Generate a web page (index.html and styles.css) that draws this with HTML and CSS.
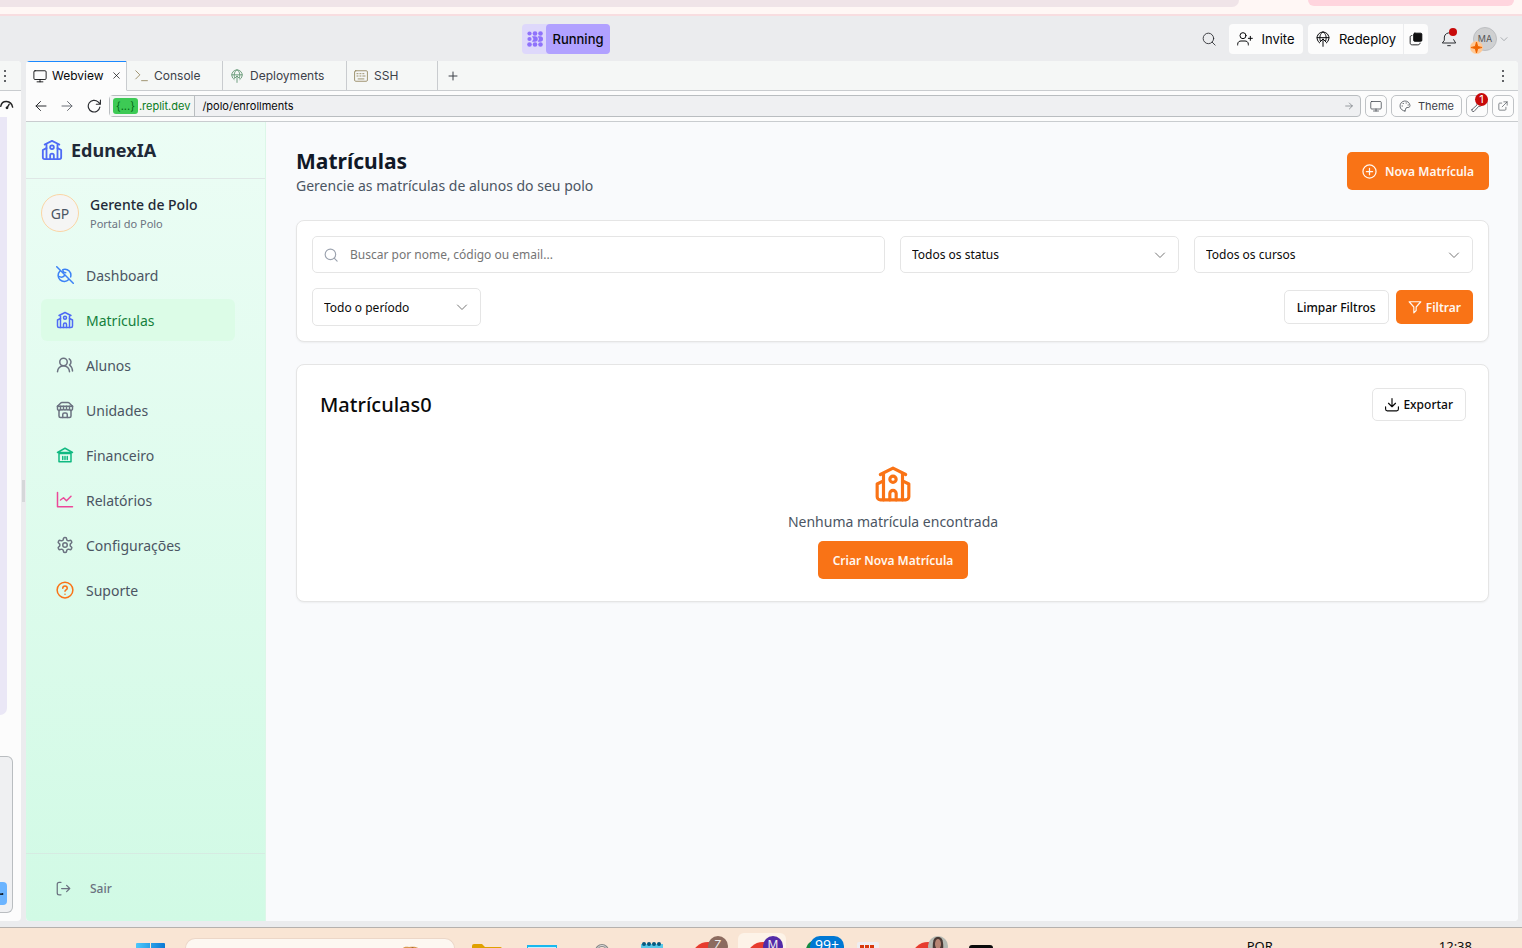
FILE: index.html
```html
<!DOCTYPE html>
<html lang="pt-BR">
<head>
<meta charset="utf-8">
<meta name="viewport" content="width=device-width, initial-scale=1">
<title>EdunexIA - Matrículas</title>
<link rel="stylesheet" href="styles.css">
</head>
<body>
<svg class="sprite" aria-hidden="true">
  <symbol id="school" viewBox="0 0 24 24"><path d="M14 22v-4a2 2 0 1 0-4 0v4"/><path d="m18 10 4 2v8a2 2 0 0 1-2 2H4a2 2 0 0 1-2-2v-8l4-2"/><path d="M18 5v17M6 5v17M4 6l8-4 8 4"/><circle cx="12" cy="9" r="2"/></symbol>
  <symbol id="search" viewBox="0 0 24 24"><circle cx="11" cy="11" r="9"/><path d="m17.500 17.500 5 5"/></symbol>
  <symbol id="chevron" viewBox="0 0 24 24"><path d="m3 8 9 9 9-9"/></symbol>
  <symbol id="globe" viewBox="0 0 24 24"><path d="M7 18a9 9 0 1 1 10 0M3 10h18M12 12v11M8 15C6 9 8 4 12 1c4 3 6 8 4 14M8 16l4-4 4 4"/></symbol>
  <symbol id="monitor" viewBox="0 0 24 24"><rect x="1.500" y="3" width="21" height="15" rx="2"/><path d="M12 18v4M7 22h10"/></symbol>
</svg>

<div class="browser-edge"><span class="edge-address"></span><span class="edge-profile"></span></div>

<header class="topbar">
  <div class="run-state">
    <svg class="run-dots" viewBox="0 0 16 16"><g><circle cx="2.500" cy="2.500" r="2.100"/><circle cx="8" cy="2.500" r="2.300"/><circle cx="13.500" cy="2.500" r="2.300"/><circle cx="2.500" cy="8" r="2.100"/><path d="M5 5.200h3a2.800 2.800 0 0 1 0 5.600H5L6.500 8zM10.700 5.200h2.500a2.800 2.800 0 0 1 0 5.600h-2.500L12 8z"/><circle cx="2.500" cy="13.500" r="2.300"/><circle cx="8" cy="13.500" r="2.300"/><circle cx="13.500" cy="13.500" r="2.300"/></g></svg>
    <button class="run-button">Running</button>
  </div>
  <div class="top-actions">
    <button class="icon-button" aria-label="Search"><svg class="icon i14"><use href="#search"/></svg></button>
    <button class="top-button invite"><svg class="icon i16" viewBox="0 0 24 24"><circle cx="9" cy="7" r="4.500"/><path d="M1 21v-1c0-4 3-5 5-5h6c2 0 5 1 5 5v1M20 8v6M17 11h6"/></svg>Invite</button>
    <div class="deploy-group">
      <button class="top-button deploy"><svg class="icon i16"><use href="#globe"/></svg>Redeploy</button>
      <button class="top-button layers" aria-label="Panels"><svg class="icon i14" viewBox="0 0 24 24"><rect x="8" y="2" width="14" height="14" rx="2" fill="#111"/><path d="M5 6C3 6 2 7 2 9v9c0 3 1 4 4 4h9c2 0 4-1 4-3"/></svg></button>
    </div>
    <button class="icon-button bell" aria-label="Notifications"><svg class="icon i16" viewBox="0 0 24 24"><path d="M14 3a7 7 0 0 0-9 6v5l-3 4h20l-3-5M10 22h4"/></svg><span class="dot"></span></button>
    <button class="account" aria-label="Account"><span class="avatar">MA</span><span class="spark"><svg viewBox="0 0 12 12"><path d="M6 1 7 5l4 1-4 1-1 4-1-4-4-1 4-1z"/></svg></span><svg class="icon i8"><use href="#chevron"/></svg></button>
  </div>
</header>

<div class="workspace">
  <aside class="left-pane">
    <div class="pane-tab"><svg class="dots" viewBox="0 0 4 14"><circle cx="2" cy="2" r="1"/><circle cx="2" cy="7" r="1"/><circle cx="2" cy="12" r="1"/></svg></div>
    <svg class="icon gauge" viewBox="0 0 20 16"><path d="M1 10C3 0 16 1 18 11M10 12l3-5"/><circle cx="10" cy="12" r="1"/></svg>
    <div class="chat-block"></div>
    <div class="composer"><button class="send" aria-label="Send"><svg viewBox="0 0 8 10"><path d="M0 4h3V3l3 2-3 2V6H0z"/></svg></button></div>
  </aside>
  <div class="handle"><span></span></div>

  <section class="window">
    <nav class="tabs">
      <button class="tab active"><svg class="icon i14"><use href="#monitor"/></svg>Webview<svg class="icon close" viewBox="0 0 10 10"><path d="m1 1 8 8M9 1 1 9"/></svg></button>
      <button class="tab console"><svg class="icon i14 olive" viewBox="0 0 24 24"><path d="m3 3 7 7-7 7M13 20h10"/></svg>Console</button>
      <button class="tab deployments"><svg class="icon i14 green"><use href="#globe"/></svg>Deployments</button>
      <button class="tab ssh"><svg class="icon i14 olive" viewBox="0 0 24 24"><rect x="1" y="3" width="22" height="18" rx="2"/><path d="M5 8h2m3 0h2m3 0h2M5 12h2m3 0h2m3 0h4M7 17h10"/></svg>SSH</button>
      <button class="tab add" aria-label="New tab"><svg class="icon i10" viewBox="0 0 10 10"><path d="M5 1v8M1 5h8"/></svg></button>
      <button class="more" aria-label="More"><svg class="dots" viewBox="0 0 4 14"><circle cx="2" cy="2" r="1"/><circle cx="2" cy="7" r="1"/><circle cx="2" cy="12" r="1"/></svg></button>
    </nav>

    <div class="urlbar">
      <div class="history">
        <button class="icon-button" aria-label="Back"><svg class="icon i12" viewBox="0 0 12 12"><path d="M11 6H1M5.500 1.500 1 6l4.500 4.500"/></svg></button>
        <button class="icon-button muted" aria-label="Forward"><svg class="icon i12" viewBox="0 0 12 12"><path d="M1 6h10M6.500 1.500 11 6l-4.500 4.500"/></svg></button>
        <button class="icon-button" aria-label="Reload"><svg class="icon i14" viewBox="0 0 24 24"><path d="M22 14a10 10 0 1 1-3-9l4 4M23 2v7h-7"/></svg></button>
      </div>
      <div class="address">
        <span class="host"><mark>{...}</mark>.replit.dev</span>
        <input class="path" type="text" aria-label="Path" value="/polo/enrollments">
        <button class="icon-button muted go" aria-label="Go"><svg class="icon i8" viewBox="0 0 12 12"><path d="M1 6h10M6.500 1.500 11 6l-4.500 4.500"/></svg></button>
      </div>
      <button class="tool" aria-label="Device"><svg class="icon i12"><use href="#monitor"/></svg></button>
      <button class="tool theme"><svg class="icon i12" viewBox="0 0 24 24"><path d="M12 22a10 10 0 1 1 10-11c0 4-3 4-6 4-4 0-2 7-4 7z"/><path d="M6 12h1M8 7h1M14 6h1M18 10h1"/></svg>Theme</button>
      <button class="tool" aria-label="Developer tools"><svg class="icon i12" viewBox="0 0 24 24"><path d="m2 19 10-9c-1-5 2-8 7-8l-3 5 3 2 4-3c0 5-3 7-8 7l-9 10c-3 1-5-1-4-4z"/></svg><span class="badge">1</span></button>
      <button class="tool" aria-label="Open in new tab"><svg class="icon i10" viewBox="0 0 24 24"><path d="M14 2h8v8M22 2 10 14M9 5H4c-1 0-2 1-2 2v13c0 1 1 2 2 2h13c1 0 2-1 2-2v-5"/></svg></button>
    </div>

    <div class="app">
      <aside class="sidebar">
        <a class="brand" href="#"><svg class="icon i22 indigo"><use href="#school"/></svg>EdunexIA</a>
        <div class="user"><span class="user-avatar">GP</span><div><strong>Gerente de Polo</strong><small>Portal do Polo</small></div></div>
        <nav class="menu">
          <a href="#"><svg class="icon i18 blue" viewBox="0 0 24 24"><path d="M1 1l22 22M5 7a8 8 0 0 0 12 11M10 4.500a8 8 0 0 1 9.500 10M4.500 14c2 1.500 6 1 7-2M9 5c0 2 2 4 4 4"/></svg>Dashboard</a>
          <a href="#" class="current"><svg class="icon i18 indigo"><use href="#school"/></svg>Matrículas</a>
          <a href="#"><svg class="icon i18 gray" viewBox="0 0 24 24"><path d="M18 21a8 8 0 0 0-16 0"/><circle cx="10" cy="8" r="5"/><path d="M22 20c0-3.370-2-6.500-4-8a5 5 0 0 0-.45-8.300"/></svg>Alunos</a>
          <a href="#"><svg class="icon i18 gray" viewBox="0 0 24 24"><path d="m2 7 4.410-4.410A2 2 0 0 1 7.830 2h8.340a2 2 0 0 1 1.420.59L22 7"/><path d="M4 12v8a2 2 0 0 0 2 2h12a2 2 0 0 0 2-2v-8"/><path d="M15 22v-4a2 2 0 0 0-2-2h-2a2 2 0 0 0-2 2v4M2 7h20"/><path d="M22 7v3a2 2 0 0 1-4 1 3 3 0 0 1-4 0 3 3 0 0 1-4 0 3 3 0 0 1-4 0 2 2 0 0 1-4-1V7M6 7v4M10 7v4M14 7v4M18 7v4"/></svg>Unidades</a>
          <a href="#"><svg class="icon i18 emerald" viewBox="0 0 24 24"><path d="M2 8.500 12 3l10 5.500zM4 9v12M20 9v12M4 21h16M9 14v4M12 14v4M15 14v4M4 10h16"/></svg>Financeiro</a>
          <a href="#"><svg class="icon i18 pink" viewBox="0 0 24 24"><path d="M2 2v19h20M6 12l4-3 4 4 6-6"/></svg>Relatórios</a>
          <a href="#"><svg class="icon i18 gray" viewBox="0 0 24 24"><path d="M12.220 2h-.44a2 2 0 0 0-2 2v.18a2 2 0 0 1-1 1.730l-.43.25a2 2 0 0 1-2 0l-.15-.08a2 2 0 0 0-2.730.73l-.22.38a2 2 0 0 0 .73 2.730l.15.100a2 2 0 0 1 1 1.720v.51a2 2 0 0 1-1 1.740l-.15.090a2 2 0 0 0-.73 2.730l.22.380a2 2 0 0 0 2.730.730l.15-.080a2 2 0 0 1 2 0l.43.250a2 2 0 0 1 1 1.730V20a2 2 0 0 0 2 2h.44a2 2 0 0 0 2-2v-.18a2 2 0 0 1 1-1.730l.43-.25a2 2 0 0 1 2 0l.15.080a2 2 0 0 0 2.730-.73l.22-.39a2 2 0 0 0-.73-2.730l-.15-.080a2 2 0 0 1-1-1.740v-.5a2 2 0 0 1 1-1.740l.15-.090a2 2 0 0 0 .73-2.730l-.22-.38a2 2 0 0 0-2.730-.73l-.15.080a2 2 0 0 1-2 0l-.43-.25a2 2 0 0 1-1-1.730V4a2 2 0 0 0-2-2z"/><circle cx="12" cy="12" r="3"/></svg>Configurações</a>
          <a href="#"><svg class="icon i18 orange" viewBox="0 0 24 24"><circle cx="12" cy="12" r="10.500"/><path d="M9 9.500a3 3 0 0 1 6 0c0 2-3 2.500-3 4M12 17.500v.2"/></svg>Suporte</a>
        </nav>
        <div class="logout"><button><svg class="icon i15" viewBox="0 0 24 24"><path d="M8 2H5C3 2 2 3 2 5v14c0 2 1 3 3 3h3M9 12h13M17 7l5 5-5 5"/></svg>Sair</button></div>
      </aside>

      <main class="content">
        <div class="page-head">
          <div><h1>Matrículas</h1><p>Gerencie as matrículas de alunos do seu polo</p></div>
          <button class="primary"><svg class="icon i15" viewBox="0 0 24 24"><circle cx="12" cy="12" r="10.500"/><path d="M12 7v10M7 12h10"/></svg>Nova Matrícula</button>
        </div>

        <form class="card filters">
          <label class="field search"><svg class="icon i14"><use href="#search"/></svg><input type="search" placeholder="Buscar por nome, código ou email..." aria-label="Buscar"></label>
          <label class="field"><select aria-label="Status"><option>Todos os status</option></select><svg class="icon i12"><use href="#chevron"/></svg></label>
          <label class="field"><select aria-label="Curso"><option>Todos os cursos</option></select><svg class="icon i12"><use href="#chevron"/></svg></label>
          <div class="filter-row">
            <label class="field period"><select aria-label="Período"><option>Todo o período</option></select><svg class="icon i12"><use href="#chevron"/></svg></label>
            <div class="filter-actions">
              <button type="button" class="outline">Limpar Filtros</button>
              <button type="button" class="primary small"><svg class="icon i14" viewBox="0 0 24 24"><path d="M2 3h20l-8 9v6l-4 4V12z"/></svg>Filtrar</button>
            </div>
          </div>
        </form>

        <section class="card results">
          <div class="results-head">
            <h2>Matrículas0</h2>
            <button class="outline"><svg class="icon i14" viewBox="0 0 24 24"><path d="M12 1v14M6 9l6 6 6-6M1 15v4c0 2 1 3 3 3h16c2 0 3-1 3-3v-4"/></svg>Exportar</button>
          </div>
          <div class="empty">
            <svg class="icon big orange"><use href="#school"/></svg>
            <p>Nenhuma matrícula encontrada</p>
            <button class="primary">Criar Nova Matrícula</button>
          </div>
        </section>
      </main>
    </div>
  </section>
</div>

<footer class="taskbar">
  <svg class="task start" viewBox="0 0 29 5"><defs><linearGradient id="win"><stop stop-color="#4cc8fb"/><stop offset="1" stop-color="#0a78d4"/></linearGradient></defs><path fill="url(#win)" d="M0 1Q0 0 1 0h13v5H0zM15 0h13q1 0 1 1v4H15z"/></svg>
  <div class="task-search"><svg viewBox="0 0 24 12"><path fill="#d9984f" d="M1 5C2 1 6 0 9 1c6-1 9 0 13 4v5H0z"/><path fill="#9c5a2a" d="M4 2l5 1 4-2 2 3-5 2z"/></svg></div>
  <svg class="task folder" viewBox="0 0 30 12"><path fill="#e0a100" d="M0 2Q0 0 2 0h8l3 3h15q2 0 2 2v7H0z"/></svg>
  <svg class="task screen" viewBox="0 0 30 12"><path fill="#19b8ee" d="M0 1h30v11H0z"/><path fill="#c8f0fc" d="M1 3h28v9H1z"/></svg>
  <svg class="task ring" viewBox="0 0 16 12"><circle cx="8" cy="8" r="5.500" fill="none" stroke="#888" stroke-width="3"/><circle cx="8" cy="8" r="5.500" fill="none" stroke="#ddd"/></svg>
  <svg class="task note" viewBox="0 0 24 12"><path fill="#58c8e8" d="M1 2h22v10H1z"/><g fill="#07577c"><circle cx="4" cy="2" r="2"/><circle cx="9" cy="2" r="2"/><circle cx="14" cy="2" r="2"/><circle cx="19" cy="2" r="2"/></g></svg>
  <div class="task chrome zed"><span>Z</span></div>
  <div class="task chrome em"><span>M</span></div>
  <div class="task whats"><span>99+</span></div>
  <svg class="task bars" viewBox="0 0 22 12"><rect width="22" height="16" rx="2" fill="#eeeef2"/><path fill="#d8380c" d="M3 3h4v9H3zM8 3h4v9H8zM13 3h4v9h-4z"/></svg>
  <div class="task chrome person"><span><svg viewBox="0 0 20 16"><path fill="#4b3a35" d="M5 16C4 4 6 1 10 1s6 3 5 15z"/><ellipse cx="10" cy="8" rx="3" ry="5" fill="#b88573"/></svg></span></div>
  <div class="task black"></div>
  <span class="lang">POR</span>
  <span class="clock">12:38</span>
</footer>
</body>
</html>
```

FILE: styles.css
```css
* { box-sizing: border-box; }
body { margin: 0; height: 100vh; display: flex; flex-direction: column; overflow: hidden; background: #ebecee; font-family: "Noto Sans", sans-serif; font-size: 14px; color: #0a0a0a; }
button, input, select { font: inherit; color: inherit; background: none; border: 0; padding: 0; margin: 0; }
button { display: flex; align-items: center; justify-content: center; white-space: nowrap; }
a { color: inherit; text-decoration: none; }
h1, h2, p { margin: 0; }
.sprite { position: absolute; width: 0; height: 0; }
.icon { flex: none; fill: none; stroke: currentColor; stroke-width: 2; stroke-linecap: round; stroke-linejoin: round; }
.i8 { width: 8px; height: 8px; }
.i10 { width: 10px; height: 10px; }
.i12 { width: 12px; height: 12px; }
.i14 { width: 14px; height: 14px; }
.i15 { width: 15px; height: 15px; }
.i16 { width: 16px; height: 16px; }
.i18 { width: 18px; height: 18px; }
.i22 { width: 22px; height: 22px; }
.icon[viewBox="0 0 10 10"], .icon[viewBox="0 0 12 12"] { stroke-width: 1; }
.blue { color: #3b82f6; }
.indigo { color: #4f6bf5; }
.emerald { color: #10b981; }
.pink { color: #ec4899; }
.orange { color: #f97316; }
.olive { color: #94875f; }
.green { color: #5f9370; }
.gray { color: #6b7280; }

.browser-edge { flex: none; height: 16px; background: #fff7f5; border-bottom: 2px solid #f8dde0; display: flex; justify-content: space-between; padding-right: 8px; }
.edge-address { width: 1239px; height: 7px; background: #f0e4e8; border-radius: 0 0 14px 0; }
.edge-profile { width: 206px; height: 6px; background: #ffd5de; border-radius: 0 0 14px 14px; }

.topbar { flex: none; height: 45px; display: flex; align-items: center; justify-content: space-between; padding: 0 14px 0 522px; font-family: "Inter", sans-serif; font-size: 13px; }
.run-state { display: flex; align-items: center; height: 30px; background: #ded8fb; border-radius: 4px; padding-left: 5px; }
.run-dots { width: 16px; height: 16px; margin-right: 3px; fill: #8f72fb; }
.run-button { height: 30px; width: 64px; background: #b1a1ff; border-radius: 4px; font-weight: 500; color: #07080a; }
.top-actions { display: flex; align-items: center; }
.top-actions .icon { stroke-width: 1.5; }
.icon-button { color: #2b2d31; }
.top-button { height: 30px; background: #fcfcfc; border-radius: 4px; gap: 8px; color: #07080a; }
.invite { width: 74px; margin-left: 13px; }
.deploy-group { display: flex; gap: 1px; margin: 0 13px 0 5px; }
.deploy { width: 95px; border-radius: 4px 0 0 4px; }
.layers { width: 24px; border-radius: 0 4px 4px 0; }
.bell { position: relative; }
.dot { position: absolute; top: -3px; right: 0; width: 8px; height: 8px; border-radius: 50%; background: #c80a0a; }
.account { position: relative; gap: 3px; margin-left: 16px; color: #6b6f76; }
.avatar { width: 24px; height: 24px; border: 1px solid #bdbfc2; border-radius: 50%; background: #cfd0d1; font-size: 9px; line-height: 22px; color: #555; }
.spark { position: absolute; left: -3px; bottom: -3px; width: 13px; height: 13px; border-radius: 50%; background: #ffc996; }
.spark svg { display: block; fill: #ee6500; stroke: #ee6500; }

.workspace { flex: 1; min-height: 0; display: flex; padding: 0 4px 6px 0; }
.left-pane { width: 21px; flex: none; background: #fcfcfc; border-radius: 0 4px 4px 0; display: flex; flex-direction: column; align-items: flex-start; overflow: hidden; }
.pane-tab { width: 100%; height: 30px; background: #f5f7f6; border-bottom: 1px solid #c9cccf; padding: 7px 0 0 3px; }
.dots { width: 4px; height: 14px; fill: #2f3237; }
.gauge { width: 14px; height: 14px; margin: 7px 0 5px; color: #222; }
.chat-block { width: 7px; flex: 1; background: #eae7f6; border-radius: 0 0 8px 0; }
.composer { width: 13px; height: 157px; margin: 41px 0 8px; border: 1px solid #b9bdc0; border-left: 0; border-radius: 0 6px 6px 0; background: #eff0f2; display: flex; align-items: flex-end; padding-bottom: 7px; }
.send { width: 7px; height: 23px; background: #6bb4ff; border-radius: 0 4px 4px 0; justify-content: flex-start; }
.send svg { width: 5px; height: 8px; fill: #000; }
.handle { width: 5px; flex: none; display: flex; align-items: center; justify-content: center; }
.handle span { width: 3px; height: 22px; background: #d5d7d9; }

.window { flex: 1; min-width: 0; display: flex; flex-direction: column; background: #fcfcfc; border-radius: 4px; overflow: hidden; font-size: 12px; }
.tabs { flex: none; display: flex; height: 30px; background: #f5f7f6; font-family: "Inter", sans-serif; color: #3c4149; }
.tab { justify-content: flex-start; gap: 6px; padding: 0 7px; border-right: 1px solid #c9cccf; border-bottom: 1px solid #c9cccf; }
.tab .icon { stroke-width: 1.5; }
.tab.active { width: 101px; background: #fcfcfc; border-bottom-color: #fcfcfc; box-shadow: inset 0 1px 0 #1a88ff; color: #07080a; padding: 0 6px 0 7px; gap: 5px; }
.tab .close { width: 7px; height: 7px; margin-left: auto; stroke-width: 1; }
.console { width: 96px; }
.deployments { width: 124px; }
.ssh { width: 91px; }
.tab.add { flex: 1; border-right: 0; padding-left: 10px; }
.tab .i10 { stroke-width: 1; }
.more { width: 30px; border-bottom: 1px solid #c9cccf; }

.urlbar { flex: none; display: flex; align-items: center; gap: 4px; height: 31px; padding: 0 4px 0 9px; border-bottom: 1px solid #c9cccf; font-family: "Inter", sans-serif; font-size: 11px; color: #3c4149; }
.history { display: flex; align-items: center; gap: 14px; margin-right: 4px; }
.muted { color: #6b6f76; }
.address { flex: 1; min-width: 0; display: flex; height: 22px; background: #eff0f2; border: 1px solid #b9bdc0; border-radius: 4px; }
.host { display: flex; align-items: center; padding: 0 4px 0 3px; border-right: 1px solid #b9bdc0; color: #0a7b22; background: #f3f5f4; }
.host mark { background: #3dca55; color: #056b18; border-radius: 3px; line-height: 16px; padding: 0 3px; margin-right: 1px; }
.path { flex: 1; min-width: 0; padding-left: 7px; color: #07080a; }
.go { width: 23px; }
.tool { position: relative; width: 22px; height: 22px; border: 1px solid #c0c3c6; border-radius: 5px; }
.tool .icon { stroke-width: 1.5; }
.theme { width: 71px; gap: 7px; }
.badge { position: absolute; top: -3px; right: -1px; width: 13px; height: 13px; border-radius: 50%; background: #c80a0a; color: #fff; font-size: 11px; line-height: 13px; }

.app { flex: 1; min-height: 0; display: flex; background: #f9fafc; }
.sidebar { width: 240px; flex: none; display: flex; flex-direction: column; background: linear-gradient(#ecfdf5, #d1fae5); border-right: 1px solid #dcf7e8; color: #4b5563; }
.brand { display: flex; align-items: center; gap: 8px; height: 57px; padding: 0 15px; border-bottom: 1px solid #dfe7e6; font-size: 18px; font-weight: 700; color: #1f2937; }
.user { display: flex; align-items: center; gap: 11px; padding: 15px; }
.user-avatar { width: 38px; height: 38px; border: 1px solid #fbd5a5; border-radius: 50%; background: #f5f5f4; text-align: center; font-size: 14px; line-height: 38px; }
.user strong { display: block; font-size: 14px; line-height: 22px; font-weight: 500; color: #1f2937; }
.user small { display: block; font-size: 11px; line-height: 16px; color: #6b7280; }
.menu { flex: 1; display: flex; flex-direction: column; gap: 3px; padding: 7px 30px 0 15px; }
.menu a { display: flex; align-items: center; gap: 12px; height: 42px; padding: 0 15px; border-radius: 6px; font-size: 14px; }
.menu .current { background: #dcfce7; color: #15803d; }
.logout { border-top: 1px solid #d6ebe2; padding: 15px 15px 14px; }
.logout button { height: 38px; gap: 19px; padding: 0 15px; font-size: 12px; font-weight: 500; color: #6b7280; }

.content { flex: 1; min-width: 0; padding: 26px 29px 0 30px; }
.page-head { display: flex; align-items: flex-start; justify-content: space-between; margin-bottom: 22px; }
.page-head .primary { margin-top: 4px; }
.page-head h1 { font-size: 21px; line-height: 26px; font-weight: 700; color: #111827; }
.page-head p { font-size: 14px; line-height: 24px; color: #4b5563; }
.primary { height: 38px; padding: 0 15px; gap: 8px; border-radius: 5px; background: #f97316; color: #fff7f0; font-size: 12px; font-weight: 600; }
.outline, .small { height: 34px; padding: 0 12px; gap: 4px; }
.outline { border: 1px solid #e5e5e5; border-radius: 5px; background: #fff; font-size: 12px; font-weight: 500; }
.card { background: #fff; border: 1px solid #e5e5e5; border-radius: 8px; box-shadow: 0 1px 2px rgba(0, 0, 0, .05); }
.filters { display: grid; grid-template-columns: repeat(4, 1fr); gap: 15px; padding: 15px; margin-bottom: 22px; }
.field { position: relative; display: flex; align-items: center; height: 37px; border: 1px solid #e5e5e5; border-radius: 5px; color: #0a0a0a; }
.field select { width: 100%; height: 100%; appearance: none; padding: 0 11px; font-size: 12px; }
.field > .i12 { position: absolute; right: 12px; color: #777; pointer-events: none; }
.search { grid-column: span 2; padding-left: 11px; gap: 12px; }
.search .icon { color: #9ca3af; }
.search input { flex: 1; font-size: 12px; outline: 0; }
.search input::placeholder { color: #757575; }
.filter-row { grid-column: 1 / -1; display: flex; align-items: center; justify-content: space-between; }
.period { width: 169px; height: 38px; }
.filter-actions { display: flex; gap: 7px; }
.results { padding: 23px 22px 22px 23px; }
.results-head { display: flex; align-items: center; justify-content: space-between; }
.results-head h2 { font-size: 20px; line-height: 32px; font-weight: 500; }
.results-head .outline { height: 33px; }
.empty { display: flex; flex-direction: column; align-items: center; padding-top: 44px; }
.big { width: 38px; height: 38px; }
.empty p { font-size: 14px; line-height: 22px; margin: 8px 0; color: #4b5563; }

.taskbar { flex: none; display: flex; align-items: flex-end; height: 21px; padding: 0 50px 0 136px; overflow: hidden; border-top: 1px solid #b5b1ae; background: #f9e5d4; }
.task { flex: none; }
.start { width: 29px; height: 5px; }
.task-search { flex: none; width: 270px; height: 10px; margin-left: 20px; border: 1px solid #ecd7c8; border-bottom: 0; border-radius: 16px 16px 0 0; background: #fdf7f1; padding: 7px 0 0 214px; overflow: hidden; }
.task-search svg { display: block; width: 24px; height: 12px; }
.folder { width: 30px; height: 12px; margin: 0 0 -8px 17px; }
.screen { width: 30px; height: 12px; margin: 0 0 -8px 25px; }
.ring { width: 16px; height: 12px; margin: 0 0 -7px 37px; }
.note { width: 24px; height: 12px; margin: 0 0 -6px 30px; }
.chrome { align-self: stretch; width: 48px; padding: 14px 0 0 3px; position: relative; overflow: hidden; }
.chrome::before { content: ""; display: block; width: 32px; height: 30px; border-radius: 50%; background: #e73c2e; }
.chrome span { position: absolute; top: 8px; left: 19px; width: 20px; height: 20px; border-radius: 50%; background: #8c6b5f; color: #eee; font-size: 12px; line-height: 18px; text-align: center; overflow: hidden; }
.zed { margin-left: 25px; }
.em { margin-left: 1px; margin-top: 5px; background: #fdf3e8; border-radius: 6px 6px 0 0; padding-top: 9px; }
.em span { top: 3px; left: 25px; background: #532ba8; }
.em::before { margin-left: 6px; }
.whats { align-self: stretch; width: 38px; margin-left: 20px; padding-top: 8px; }
.whats span { display: block; margin-left: 4px; width: 34px; height: 22px; border-radius: 10px; background: #0078d4; color: #fff; font-size: 14px; line-height: 18px; text-align: center; box-shadow: -4px 4px 0 #138a43; }
.bars { width: 22px; height: 12px; margin: 0 0 -6px 13px; }
.person { margin-left: 30px; }
.person span { background: #b6bab3; }
.black { width: 24px; height: 3px; margin-left: 12px; background: #0b0b0b; border-radius: 6px 6px 0 0; }
.lang, .clock { height: 10px; font-size: 13px; line-height: 16px; }
.lang { margin-left: auto; }
.clock { margin-left: 166px; }
```
